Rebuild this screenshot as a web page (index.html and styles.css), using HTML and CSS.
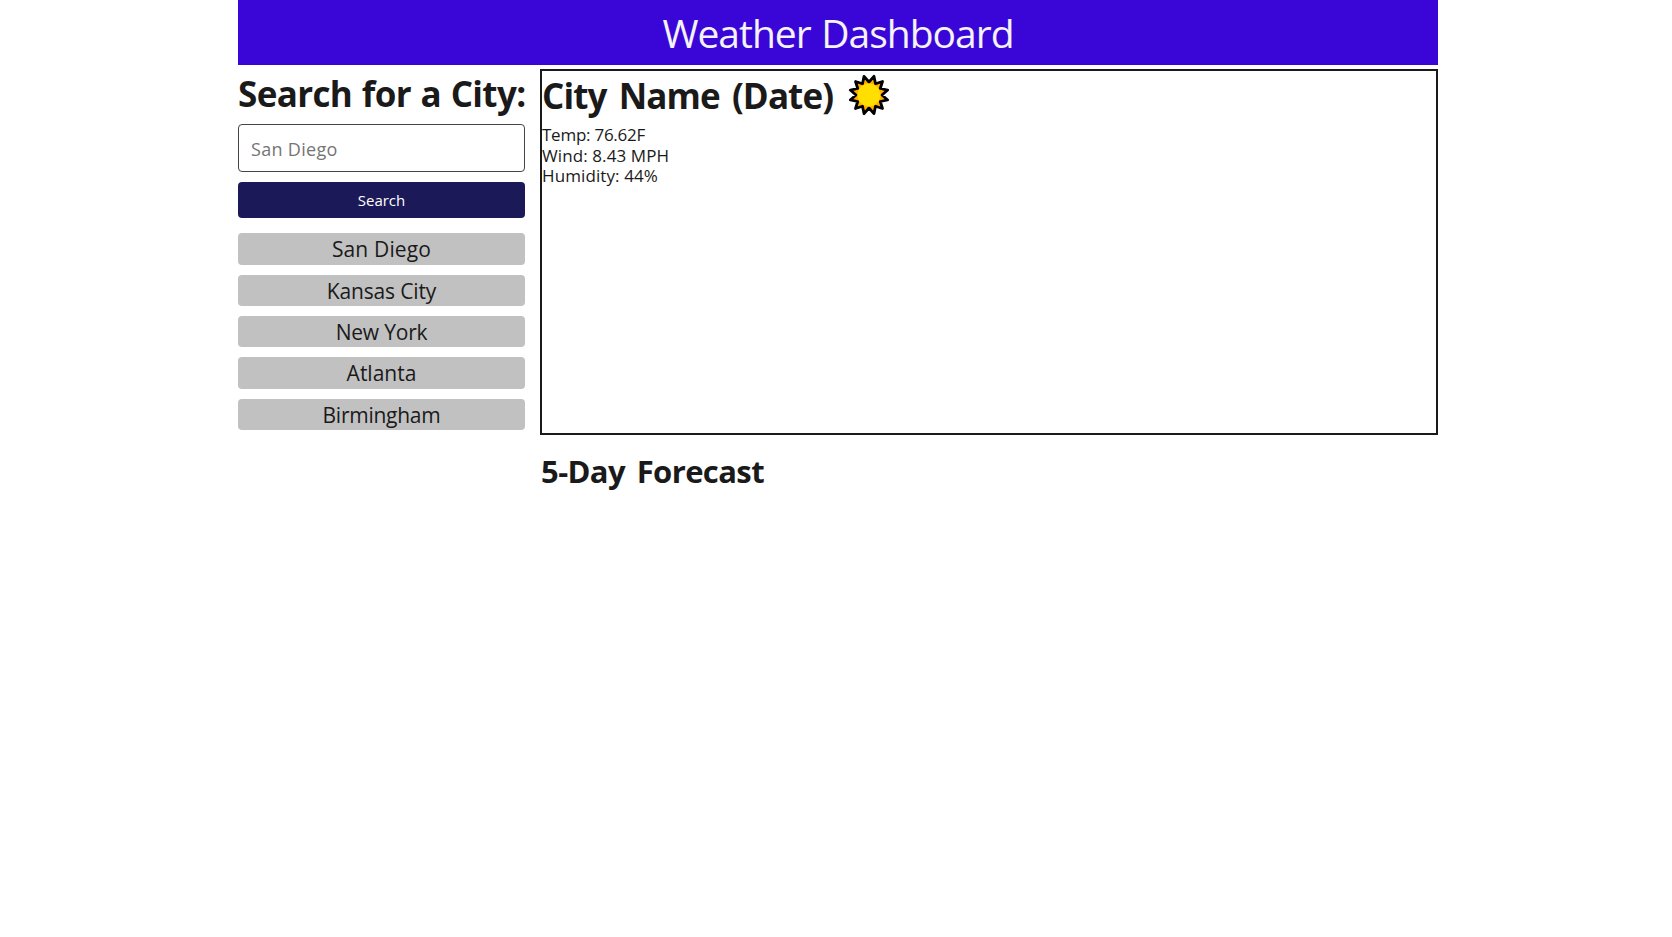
FILE: index.html
```
<!DOCTYPE html>
<html lang="en">
<head>
<meta charset="utf-8">
<title>Weather Dashboard</title>
<link rel="stylesheet" href="styles.css">
</head>
<body>
<div class="container">
  <header class="header"><h1 class="title">Weather Dashboard</h1></header>
  <main class="main">
    <aside class="sidebar">
      <h2 class="search-title">Search for a City:</h2>
      <input class="search-input" type="text" placeholder="San Diego">
      <button class="search-button">Search</button>
      <div class="cities">
        <div class="city"><span class="san-diego">San Diego</span></div>
        <div class="city"><span class="kansas">Kansas City</span></div>
        <div class="city"><span class="new-york">New York</span></div>
        <div class="city"><span class="atlanta">Atlanta</span></div>
        <div class="city"><span class="birmingham">Birmingham</span></div>
      </div>
    </aside>
    <section class="content">
      <div class="current">
        <div class="current-head">
          <h2 class="city-name">City Name (Date)</h2>
          <svg class="sun" viewBox="-21 -21 42 42" aria-hidden="true">
            <path fill="#ffb000" stroke="#000" stroke-width="2.8" stroke-linejoin="round" d="M4.95-18.7L6.5-11.26L13.5-13.5L11.26-6.5L18.7-4.95L13 0L18.7 4.95L11.26 6.5L13.5 13.5L6.5 11.26L4.95 18.7L0 13L-4.95 18.7L-6.5 11.26L-13.5 13.5L-11.26 6.5L-18.7 4.95L-13 0L-18.7-4.95L-11.26-6.5L-13.5-13.5L-6.5-11.26L-4.95-18.7L0-13Z"/>
            <circle r="11.4" fill="#ffde00"/>
          </svg>
        </div>
        <p class="stat temp">Temp: 76.62F</p>
        <p class="stat wind">Wind: 8.43 MPH</p>
        <p class="stat humidity">Humidity: 44%</p>
      </div>
      <h2 class="forecast-title">5-Day Forecast</h2>
    </section>
  </main>
</div>
</body>
</html>
```
FILE: styles.css
```
* { box-sizing: border-box; margin: 0; }
body { background: #fff; color: #1a1a1a; font-family: "Open Sans", "Noto Sans", sans-serif; }
h1, h2, p { white-space: nowrap; }
.container { width: 1200px; margin-left: 238px; }
.header { height: 65px; display: flex; justify-content: center; background: #3a06d8; color: #f4f2fa; }
.title { font-size: 39px; font-weight: 400; line-height: 66px; letter-spacing: -1px; word-spacing: 1.5px; }
.main { display: flex; gap: 15px; padding-top: 4px; }
.sidebar { width: 287px; display: flex; flex-direction: column; }
.search-title { height: 55px; font-size: 35px; font-weight: 700; line-height: 49px; letter-spacing: -0.65px; word-spacing: 1.2px; }
.search-input { height: 48px; padding: 1px 12px 0; border: 1px solid #444; border-radius: 4px; font: 400 18px "Open Sans", sans-serif; letter-spacing: 0.3px; }
.search-input::placeholder { color: #757575; }
.search-button { height: 36px; margin-top: 10px; border: 0; border-radius: 4px; background: #1c1959; color: #fff; font: 400 15px "Open Sans", sans-serif; }
.cities { display: flex; flex-direction: column; gap: 10px; margin-top: 15.3px; }
.city { height: 31.4px; border-radius: 4px; background: #c1c1c1; font-size: 21px; line-height: 33px; text-align: center; }
.san-diego { letter-spacing: 0.15px; }
.kansas { letter-spacing: -0.15px; }
.new-york { letter-spacing: -0.2px; }
.birmingham { letter-spacing: -0.25px; }
.content { width: 898px; }
.current { height: 366px; border: 2px solid #1a1a1a; }
.current-head { display: flex; height: 54px; gap: 15px; }
.city-name { font-size: 35px; font-weight: 700; line-height: 49px; letter-spacing: -0.9px; word-spacing: 4px; }
.sun { width: 42px; height: 42px; margin-top: 3px; }
.stat { font-size: 17px; line-height: 20.6px; }
.temp { letter-spacing: -0.25px; }
.wind { letter-spacing: 0.1px; }
.humidity { letter-spacing: 0.1px; }
.forecast-title { font-size: 31px; font-weight: 700; line-height: 44px; margin-top: 14px; padding-left: 1px; letter-spacing: -0.6px; word-spacing: 4.2px; }
```
